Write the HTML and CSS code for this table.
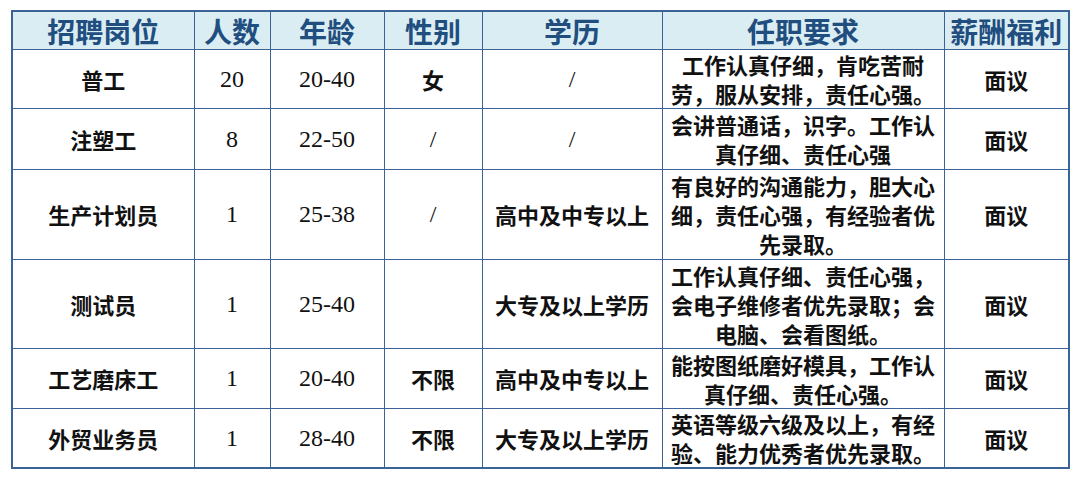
FILE: index.html
```html
<!DOCTYPE html>
<html lang="zh">
<head>
<meta charset="utf-8">
<title>招聘岗位</title>
<link rel="stylesheet" href="styles.css">
</head>
<body>
<div class="wrap">
<table class="jobs">
  <colgroup>
    <col class="c1"><col class="c2"><col class="c3"><col class="c4"><col class="c5"><col class="c6"><col class="c7">
  </colgroup>
  <thead>
    <tr class="head">
      <th>招聘岗位</th><th>人数</th><th>年龄</th><th>性别</th><th>学历</th><th>任职要求</th><th>薪酬福利</th>
    </tr>
  </thead>
  <tbody>
    <tr class="r1">
      <td>普工</td><td class="num">20</td><td class="num">20-40</td><td>女</td><td class="num">/</td>
      <td class="req">工作认真仔细，肯吃苦耐<br>劳，服从安排，责任心强。</td><td>面议</td>
    </tr>
    <tr class="r2">
      <td>注塑工</td><td class="num">8</td><td class="num">22-50</td><td class="num">/</td><td class="num">/</td>
      <td class="req">会讲普通话，识字。工作认<br>真仔细、责任心强</td><td>面议</td>
    </tr>
    <tr class="r3">
      <td>生产计划员</td><td class="num">1</td><td class="num">25-38</td><td class="num">/</td><td>高中及中专以上</td>
      <td class="req">有良好的沟通能力，胆大心<br>细，责任心强，有经验者优<br>先录取。</td><td>面议</td>
    </tr>
    <tr class="r4">
      <td>测试员</td><td class="num">1</td><td class="num">25-40</td><td></td><td>大专及以上学历</td>
      <td class="req">工作认真仔细、责任心强，<br>会电子维修者优先录取；会<br>电脑、会看图纸。</td><td>面议</td>
    </tr>
    <tr class="r5">
      <td>工艺磨床工</td><td class="num">1</td><td class="num">20-40</td><td>不限</td><td>高中及中专以上</td>
      <td class="req">能按图纸磨好模具，工作认<br>真仔细、责任心强。</td><td>面议</td>
    </tr>
    <tr class="r6">
      <td>外贸业务员</td><td class="num">1</td><td class="num">28-40</td><td>不限</td><td>大专及以上学历</td>
      <td class="req">英语等级六级及以上，有经<br>验、能力优秀者优先录取。</td><td>面议</td>
    </tr>
  </tbody>
</table>
</div>
</body>
</html>
```

FILE: styles.css
```css
html, body {
  margin: 0;
  padding: 0;
  background: #ffffff;
}
.wrap {
  padding: 10px 11px 0 11px;
}
.jobs {
  border-collapse: collapse;
  table-layout: fixed;
  width: 1057px;
  border: 2px solid #3b6396;
  font-family: "Noto Sans CJK SC", "Liberation Serif", sans-serif;
  color: #111;
}
.c1 { width: 182px; }
.c2 { width: 76px; }
.c3 { width: 114px; }
.c4 { width: 98px; }
.c5 { width: 180px; }
.c6 { width: 282px; }
.c7 { width: 125px; }
.jobs th, .jobs td {
  border: 1.5px solid #3b6396;
  padding: 0;
  text-align: center;
  vertical-align: middle;
}
.jobs th {
  background: #daedf3;
  color: #1f4e7f;
  font-size: 28px;
  font-weight: 700;
  line-height: 34px;
  height: 37px;
}
.jobs td {
  font-size: 22px;
  font-weight: 700;
  line-height: 29px;
}
.jobs td.num {
  font-family: "Liberation Serif", serif;
  font-weight: 400;
  font-size: 24px;
}
.r1 td { height: 58px; }
.r2 td { height: 60px; }
.r3 td { height: 89px; }
.r4 td { height: 88px; }
.r5 td { height: 59px; }
.r6 td { height: 58px; }
```
